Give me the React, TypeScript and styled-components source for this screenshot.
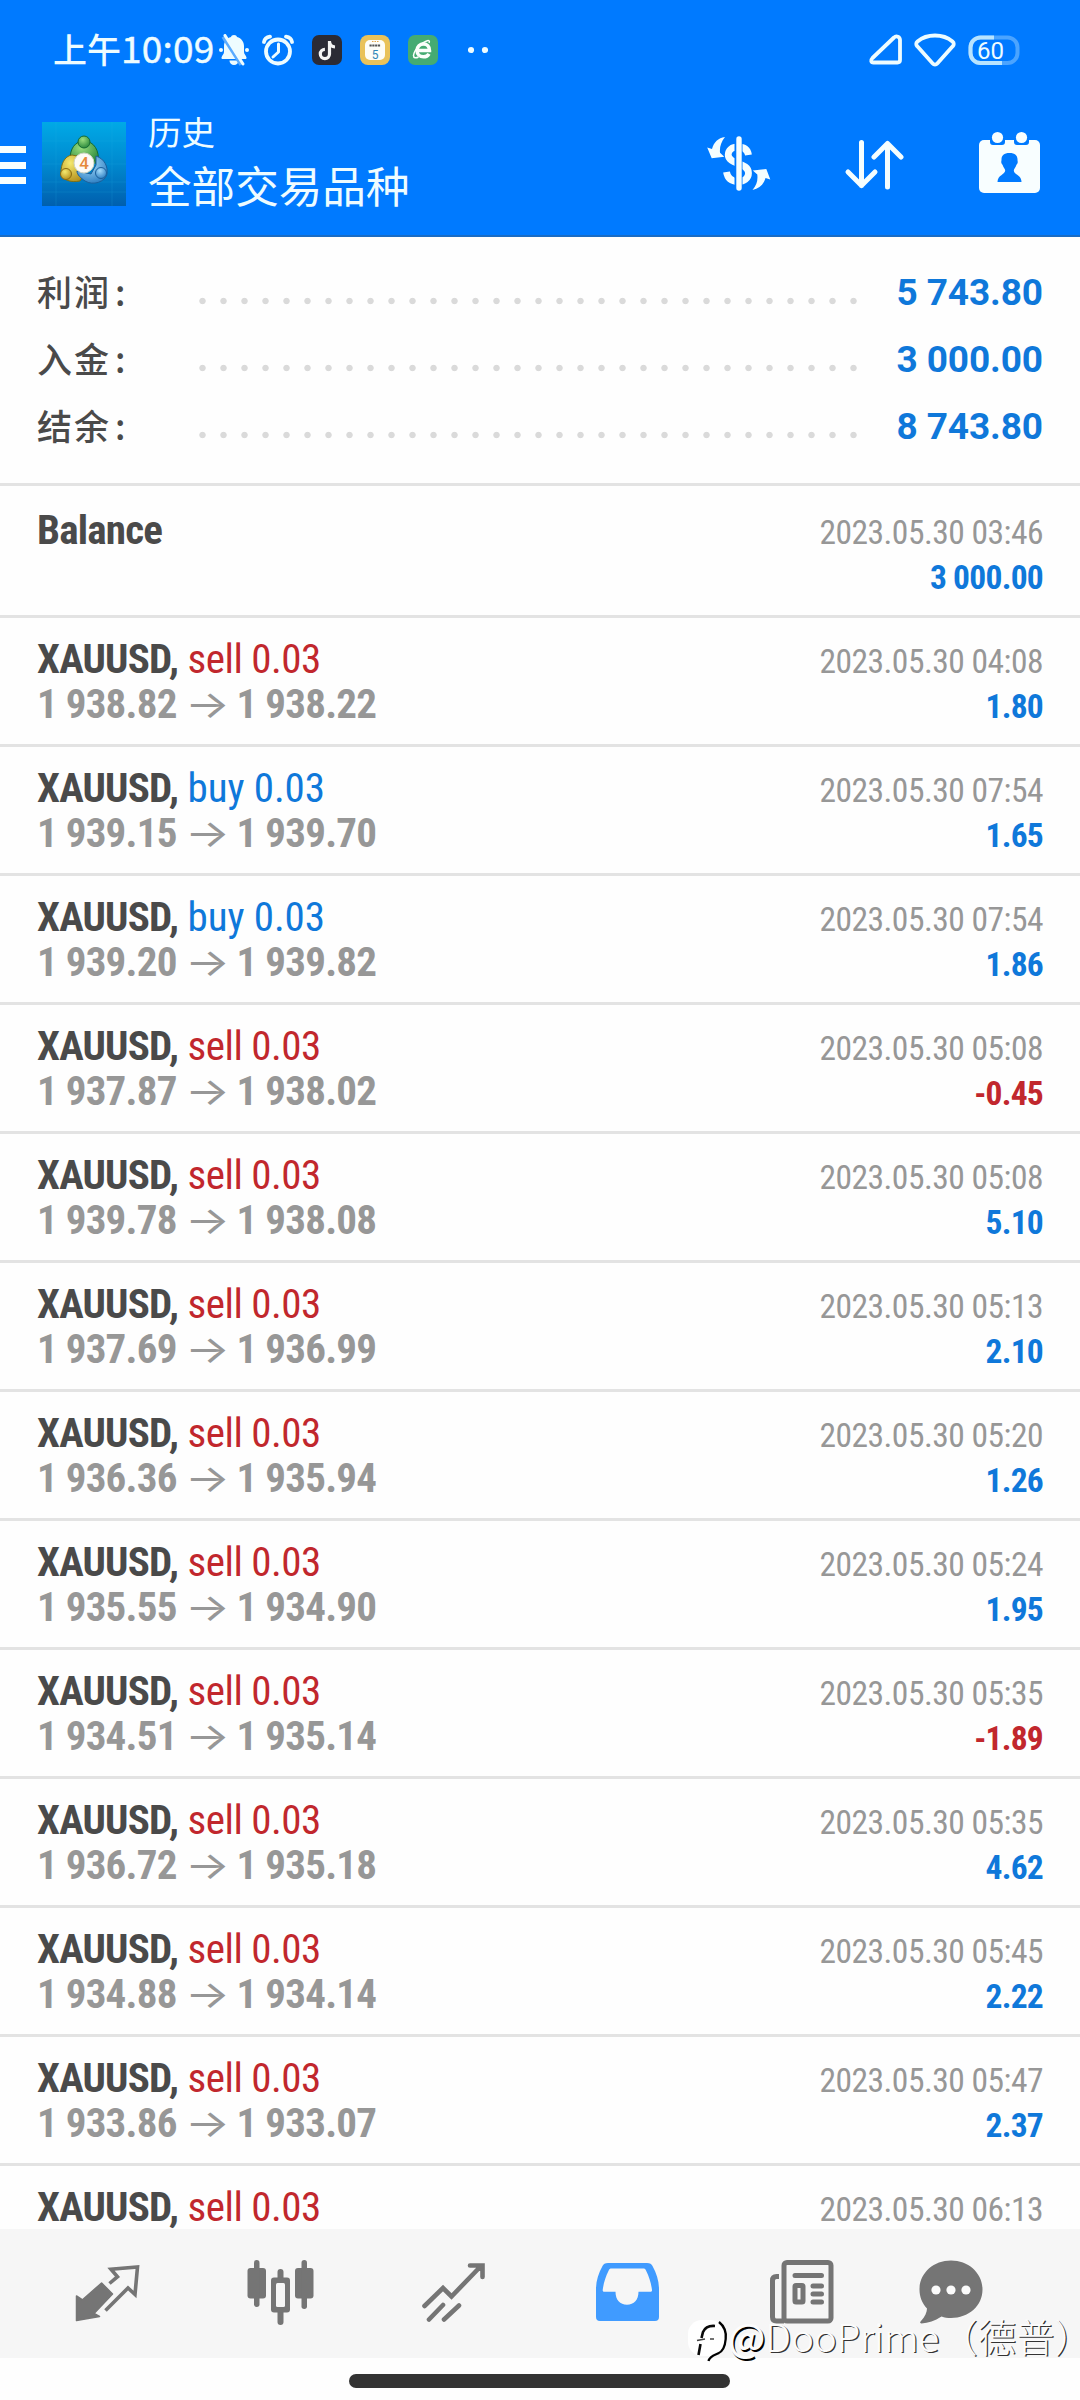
import React from 'react';
import styled, { createGlobalStyle } from 'styled-components';

const GlobalStyle = createGlobalStyle`
  * { box-sizing: border-box; }
  body { margin: 0; background: #fefefe; }
`;

const BLUE = '#007aff';
const ICE = '#eefcff';
const CJK = '"Noto Sans CJK SC", sans-serif';

const Screen = styled.div`
  width: 1080px;
  height: 2400px;
  display: flex;
  flex-direction: column;
  background: #fefefe;
  overflow: hidden;
  position: relative;
  font-family: Roboto, ${CJK};
`;

const Header = styled.header`
  height: 237px;
  flex: none;
  background: ${BLUE};
  border-bottom: 2px solid #1a6cc4;
`;

const StatusBar = styled.div`
  height: 100px;
  padding: 0 60px 0 53px;
  display: flex;
  align-items: center;
  color: ${ICE};
`;

const Clock = styled.div`
  width: 166px;
  display: flex;
  align-items: baseline;
  white-space: nowrap;
  margin-top: -4px;
  font: 500 34px/50px ${CJK};
`;

const ClockDigits = styled.span`
  font-size: 37px;
  font-weight: 400;
  letter-spacing: 0.2px;
  -webkit-text-stroke: 0.4px ${ICE};
`;

const StatusIcons = styled.div<{ $gap: number }>`
  display: flex;
  align-items: center;
  gap: ${(p) => p.$gap}px;
`;

const Overflow = styled.div`
  display: flex;
  margin-left: 12px;
`;

const Spacer = styled.div`
  flex: 1;
`;

const Toolbar = styled.div`
  height: 135px;
  display: flex;
  align-items: flex-start;
  padding: 10px 39px 0 0;
`;

const Menu = styled.div`
  width: 26px;
  margin: 36px 16px 0 0;
  display: flex;
  flex-direction: column;
  gap: 8.5px;
`;

const MenuBar = styled.span`
  height: 7px;
  background: #f8feff;
`;

const LogoBox = styled.div`
  margin-top: 12px;
  width: 84px;
  height: 84px;
`;

const Titles = styled.div`
  margin-left: 22px;
  color: ${ICE};
  font-family: ${CJK};
  white-space: nowrap;
`;

const Caption = styled.div`
  font-size: 33.5px;
  line-height: 42px;
`;

const Title = styled.div`
  font-size: 43.6px;
  line-height: 64px;
`;

const Actions = styled.div`
  display: flex;
  align-items: flex-start;
`;

const Action = styled.div<{ $left?: number }>`
  margin-left: ${(p) => p.$left ?? 0}px;
  margin-top: 2px;
  height: 84px;
`;

const Summary = styled.section`
  height: 249px;
  flex: none;
  padding: 22px 37px 0 37px;
  border-bottom: 3px solid #e3e3e3;
`;

const SummaryRow = styled.div`
  height: 67px;
  display: flex;
  align-items: center;
`;

const SummaryLabel = styled.div`
  width: 155px;
  margin-top: -4px;
  font: 500 35px/67px ${CJK};
  letter-spacing: 2px;
  color: #4a4a4a;
`;

const Colon = styled.span`
  margin-left: 4px;
`;

const Leader = styled.div`
  width: 672px;
  height: 8px;
  margin-top: 16px;
  background: radial-gradient(circle at 10.5px 4px, #dadada 2.8px, transparent 3.6px) 0 0 / 21px 8px repeat-x;
`;

const SummaryValue = styled.div`
  flex: 1;
  text-align: right;
  font: 700 37px/69px Roboto, sans-serif;
  letter-spacing: -0.1px;
  color: #0f78da;
  white-space: nowrap;
`;

const List = styled.main`
  flex: 1;
  min-height: 0;
  overflow: hidden;
`;

const Row = styled.article<{ $tall?: boolean }>`
  height: ${(p) => (p.$tall ? 132 : 129)}px;
  padding: ${(p) => (p.$tall ? 22 : 19)}px 37px 0;
  border-bottom: 3px solid #e3e3e3;
`;

const Line = styled.div`
  height: 45px;
  line-height: 45px;
  display: flex;
  justify-content: space-between;
  align-items: baseline;
  white-space: nowrap;
  font-stretch: 75%;
`;

const Deal = styled.div`
  font-size: 41px;
  color: #4a4a4a;
`;

const Symbol = styled.span`
  font-weight: 700;
  letter-spacing: -0.8px;
`;

const Side = styled.span<{ $side: 'buy' | 'sell' }>`
  letter-spacing: ${(p) => (p.$side === 'buy' ? '-0.1px' : '-0.5px')};
  color: ${(p) => (p.$side === 'buy' ? '#0f78da' : '#c1272d')};
`;

const Prices = styled.div`
  font-size: 41px;
  font-weight: 700;
  letter-spacing: -0.75px;
  color: #979797;
`;

const Arrow = styled.span`
  display: inline-block;
  margin-right: 7px;
  font: 400 38px/1 Inter, sans-serif;
  transform: scaleX(1.24);
  transform-origin: left;
`;

const DateText = styled.div`
  font-size: 33.5px;
  letter-spacing: -0.5px;
  color: #979797;
`;

const Profit = styled.div<{ $loss?: boolean }>`
  font-size: 33.5px;
  font-weight: 700;
  letter-spacing: -0.75px;
  color: ${(p) => (p.$loss ? '#c1272d' : '#0f78da')};
`;

const Nav = styled.nav`
  height: 129px;
  flex: none;
  background: #f6f6f6;
  padding-left: 21px;
  display: grid;
  grid-template-columns: 173px 173px 173px 174px 174px 126px;
`;

const Tab = styled.div`
  display: flex;
  justify-content: center;
  padding-top: 28px;
`;

const Footer = styled.footer`
  height: 42px;
  flex: none;
  display: flex;
  justify-content: center;
  padding: 16px 2px 0 0;
`;

const HomeBar = styled.div`
  width: 381px;
  height: 14px;
  border-radius: 7px;
  background: #333;
`;

const Watermark = styled.div`
  position: absolute;
  left: 687px;
  top: 2316px;
  display: flex;
  align-items: center;
  height: 46px;
  white-space: nowrap;
  color: #fcfcfc;
`;

const WatermarkText = styled.div`
  margin-top: -8px;
  font: 300 38.4px/46px ${CJK};
  text-shadow: 1.3px 1.3px 0.5px #333;
`;

const WatermarkAt = styled.span`
  margin-left: -1px;
  font-weight: 500;
  text-shadow: 1.5px 1.5px 0 #000;
`;

const HalfWidth = styled.span`
  font-feature-settings: 'halt';
`;

const trades: [('buy' | 'sell'), string, string, string, string][] = [
  ['sell', '1 938.82', '1 938.22', '04:08', '1.80'],
  ['buy', '1 939.15', '1 939.70', '07:54', '1.65'],
  ['buy', '1 939.20', '1 939.82', '07:54', '1.86'],
  ['sell', '1 937.87', '1 938.02', '05:08', '-0.45'],
  ['sell', '1 939.78', '1 938.08', '05:08', '5.10'],
  ['sell', '1 937.69', '1 936.99', '05:13', '2.10'],
  ['sell', '1 936.36', '1 935.94', '05:20', '1.26'],
  ['sell', '1 935.55', '1 934.90', '05:24', '1.95'],
  ['sell', '1 934.51', '1 935.14', '05:35', '-1.89'],
  ['sell', '1 936.72', '1 935.18', '05:35', '4.62'],
  ['sell', '1 934.88', '1 934.14', '05:45', '2.22'],
  ['sell', '1 933.86', '1 933.07', '05:47', '2.37'],
  ['sell', '', '', '06:13', ''],
];

const BellOff = () => (
  <svg width="30" height="32" viewBox="0 0 30 32" fill={ICE}>
    <path d="M15 1c1.600 0 2.800.8 3 2C22.500 4.200 25 8 25 12v6c0 2 2 3.500 2.500 5.500.2 1-.5 1.500-1.500 1.500H4c-1 0-1.700-.5-1.500-1.500C3 21.500 5 20 5 18v-6c0-4 2.500-7.800 7-9 .2-1.200 1.400-2 3-2z" />
    <path d="M10.500 26.500h9a4.500 4.500 0 0 1-9 0z" />
    <circle cx="2" cy="16" r="2" />
    <circle cx="28" cy="16" r="2" />
    <path d="M4.500 2.500l18 28" stroke="#5aabff" strokeWidth="4.500" />
    <path d="M6 1.500l18 28.500" stroke={ICE} strokeWidth="3" strokeLinecap="round" />
  </svg>
);

const Alarm = () => (
  <svg width="32" height="32" viewBox="0 0 32 32" fill="none" stroke={ICE} strokeLinecap="round">
    <circle cx="16" cy="17.500" r="12" strokeWidth="3.800" />
    <path d="M16.500 10v8l-5.500 5" strokeWidth="3" strokeLinejoin="round" />
    <path d="M2 8C2.500 5 5 3 8 2.600M30 8C29.500 5 27 3 24 2.600" strokeWidth="3.800" />
  </svg>
);

const TikTok = () => (
  <svg width="30" height="30" viewBox="0 0 30 30">
    <rect width="30" height="30" rx="7" fill="#2b2b35" />
    <path d="M17.500 6v13a4.600 4.600 0 1 1-4.600-4.600M17.500 7c.5 3 2.500 4.800 5.500 5" fill="none" stroke="#f4f4f4" strokeWidth="3.200" />
  </svg>
);

const CalendarApp = () => (
  <svg width="30" height="30" viewBox="0 0 30 30">
    <rect width="30" height="30" rx="8" fill="#e9c25a" />
    <rect x="5" y="5" width="20" height="20" rx="5" fill="#fdfdf8" />
    <path d="M12 6.500h7" stroke="#e2a54a" strokeWidth="1.200" strokeDasharray="1.500 1" />
    <path d="M9.500 10.500h11" stroke="#555" strokeWidth="2.200" strokeDasharray="2.200 .6" />
    <text x="15" y="23.500" fontSize="12" fontFamily="Roboto, sans-serif" textAnchor="middle" fill="#2f86b8">5</text>
  </svg>
);

const Browser = () => (
  <svg width="30" height="30" viewBox="0 0 30 30">
    <rect width="30" height="30" rx="7" fill="#45ab72" />
    <g fill="none" stroke="#fbfffb">
      <path d="M9 15.500h12.500c0-4-2.500-6.500-6-6.500s-6.500 2.800-6.500 6.500 2.800 6.300 6.500 6.300c2.500 0 4.500-1.200 5.500-3" strokeWidth="3.500" />
      <path d="M21 8c1-2 0-3-2.500-2C13 8 6 15 5.500 20.500c0 2.800 2.500 2.800 5 1.500" strokeWidth="1.500" />
    </g>
  </svg>
);

const MoreDots = () => (
  <svg width="20" height="8" viewBox="0 0 20 8" fill={ICE}>
    <circle cx="3" cy="4" r="3.100" />
    <circle cx="17" cy="4" r="3.100" />
  </svg>
);

const Signal = () => (
  <svg width="34" height="34" viewBox="0 0 34 34" fill="none" stroke={ICE} strokeWidth="3.800" strokeLinejoin="round">
    <path d="M26 4.500 4.500 25C2.300 27.200 3 29.500 5.500 29.500h24c1.700 0 2.500-1 2.500-2.500V7c0-3.300-3.700-4.800-6-2.500z" />
  </svg>
);

const Wifi = () => (
  <svg width="42" height="34" viewBox="0 0 42 34" fill="none" stroke={ICE} strokeWidth="3.800" strokeLinejoin="round">
    <path d="M3.500 8.500C13 .5 29 .5 38.500 8.500c1.800 1.500 1.500 3.500.2 4.800L23.300 30.500c-1.300 1.400-3.300 1.400-4.600 0L3.300 13.300C2 12 1.700 10 3.500 8.500z" />
  </svg>
);

const Battery = () => (
  <svg width="52" height="34" viewBox="0 0 52 34">
    <rect x="2.500" y="4.500" width="47" height="25.500" rx="10" fill="none" stroke="#4ba4ff" strokeWidth="4" />
    <path d="M26 4.500H12.500a10 10 0 0 0-10 10V20a10 10 0 0 0 10 10H34" fill="none" stroke="#b8e4ff" strokeWidth="4" />
    <text x="22.500" y="25.500" fontSize="24" fontFamily="Roboto, sans-serif" textAnchor="middle" fill={ICE}>60</text>
  </svg>
);

const Logo = () => (
  <svg width="84" height="84" viewBox="0 0 84 84">
    <defs>
      <linearGradient id="sky" x1="0" y1="0" x2="0" y2="1">
        <stop offset="0" stopColor="#00a9e6" />
        <stop offset=".5" stopColor="#0089cf" />
        <stop offset="1" stopColor="#005fae" />
      </linearGradient>
      <radialGradient id="green" cx=".4" cy=".3" r=".8">
        <stop offset="0" stopColor="#9ade7e" />
        <stop offset="1" stopColor="#1d7f35" />
      </radialGradient>
      <radialGradient id="gold" cx=".4" cy=".3" r=".8">
        <stop offset="0" stopColor="#f4e96f" />
        <stop offset="1" stopColor="#b08a17" />
      </radialGradient>
      <radialGradient id="azure" cx=".4" cy=".3" r=".8">
        <stop offset="0" stopColor="#a6dcfb" />
        <stop offset="1" stopColor="#2277be" />
      </radialGradient>
    </defs>
    <rect width="84" height="84" fill="url(#sky)" />
    <path d="M0 19h84M0 42h84M0 60h84M0 70h84M14 0v84M70 0v84" stroke="#27b4e4" strokeWidth=".5" opacity=".35" />
    <path d="M42 19c-9 0-14 8-14 18l8 5 20-1c2-12-4-22-14-22z" fill="url(#green)" stroke="#146b33" />
    <path d="M30 33c-8 1-11 10-11 17 0 8 10 11 19 9l4-7-9-9 2-9z" fill="url(#gold)" stroke="#7d7016" />
    <path d="M54 34c9 3 12 11 11 18-2 8-14 12-22 7-4-3-8-6-8-10l14 3 5-9z" fill="url(#azure)" stroke="#1c5f9b" />
    <circle cx="42" cy="20" r="6" fill="url(#green)" stroke="#146b33" />
    <circle cx="24" cy="52" r="5.500" fill="url(#gold)" stroke="#8a6a12" />
    <circle cx="59" cy="51" r="5.500" fill="url(#azure)" stroke="#1c5f9b" />
    <circle cx="42" cy="41" r="10" fill="#fdfbf6" stroke="#cfd4c4" />
    <text x="42" y="47" fontSize="17" fontWeight="500" fontFamily="Roboto, sans-serif" textAnchor="middle" fill="#e58a3c">4</text>
  </svg>
);

const DollarCycle = () => (
  <svg width="64" height="84" viewBox="0 -25 64 84" fill="none" stroke="#f5feff">
    <path d="M41.500 18C40.500 12 36 10 31 10c-6 0-9.800 3-9.800 7.800C21.200 28 41.500 25 41.500 36c0 5.500-4.500 8.500-10.500 8.500-6.500 0-10.500-3.500-11.500-9.500" strokeWidth="6.800" />
    <path d="M31.500 0v54" stroke={BLUE} strokeWidth="8" />
    <path d="M32 2v49" strokeWidth="5.400" strokeLinecap="round" />
    <path d="M18 0c-7 1-11 5-13 12L.2 10.500l4.500 10.800 12.600-1.500-4.300-4C12.500 10 14 5 18 0zM45.500 53c7-1.500 11-5.500 13-12l4.800 1.500-4-10.500-13.500 1.500 4.500 4C51 44 49.500 48 45.500 53z" fill="#f5feff" stroke="none" />
  </svg>
);

const SortArrows = () => (
  <svg width="60" height="84" viewBox="0 -26 60 84" fill="none" stroke="#f5feff" strokeWidth="5" strokeLinecap="round" strokeLinejoin="round">
    <path d="M17.500 4.500v43M4 34l13.500 13.500L31 34" />
    <path d="M43.500 49V5.500M30 19 43.500 5.500 57 19" />
  </svg>
);

const ContactCalendar = () => (
  <svg width="62" height="84" viewBox="0 -18 62 84">
    <rect x="0" y="10" width="61" height="53" rx="5" fill="#f8feff" />
    <path d="M11 9h15v3a3 3 0 0 1-3 3h-9a3 3 0 0 1-3-3zM35 9h15v3a3 3 0 0 1-3 3h-9a3 3 0 0 1-3-3z" fill={BLUE} />
    <circle cx="18.500" cy="7.500" r="5.600" fill="#f8feff" />
    <circle cx="42.500" cy="7.500" r="5.600" fill="#f8feff" />
    <path d="M30.500 23c5.500 0 8 2.600 8 6.500 0 1.500.4 2 .2 3-.3 1.500-1 1.500-1.300 2.600-.5 2-2.600 4-2.600 5.400 0 4 7.700 4.500 7.700 11.500h-24c0-7 7.700-7.500 7.700-11.500 0-1.400-2.100-3.400-2.600-5.400-.3-1.100-1-1.100-1.300-2.600-.2-1 .2-1.500.2-3 0-3.900 2.500-6.500 8-6.500z" fill={BLUE} />
  </svg>
);

const GREY = '#757575';

/* Tab icons share a 68x68 box. */
const TabIcon = ({ children }: { children: React.ReactNode }) => (
  <svg width="68" height="68" viewBox="0 0 68 68" fill="none" stroke={GREY}>
    {children}
  </svg>
);

const QuotesIcon = () => (
  <TabIcon>
    <path d="M27.600 26 38.500 37 20 56.500l5.500 3L2.500 63.500V39l6 3.800z" fill={GREY} strokeWidth="1.500" strokeLinejoin="round" />
    <path d="M35.500 26.500l8-6.800-6.500-7.500L63.500 10 61 37.500l-7-6.500L31.500 53.500" strokeWidth="3.600" />
  </TabIcon>
);

const ChartIcon = () => (
  <TabIcon>
    <g fill={GREY} stroke="none">
      <rect x=".5" y="11" width="18.500" height="30.500" rx="3" />
      <rect x="7" y="3" width="5.500" height="47" rx="2.700" />
      <rect x="48" y="11" width="18.500" height="30.500" rx="3" />
      <rect x="54.500" y="3" width="5.500" height="49" rx="2.700" />
      <rect x="30.500" y="12" width="6" height="56" rx="3" />
      <rect x="24" y="20.500" width="19" height="35" rx="3" />
      <rect x="29" y="26" width="9" height="24" rx="1.500" fill="#f6f6f6" />
    </g>
  </TabIcon>
);

const TradeIcon = () => (
  <TabIcon>
    <path d="M4.500 49 23 31l8.500 8.500L60 10M50 8.500h12.500V20M9 62.500 23 48M24 62.500 39 48.500" strokeWidth="4.600" strokeLinecap="round" />
  </TabIcon>
);

const HistoryIcon = () => (
  <TabIcon>
    <path d="M15 6h39c3 0 4.500 1 5.500 3 4 7 6.500 15 6.500 23v28a4 4 0 0 1-4 4H7a4 4 0 0 1-4-4V32C3 24 5.500 16 9.500 9c1-2 2.500-3 5.500-3zM18.500 11.500c-1.500 0-2.200.5-2.800 2C12.500 20 10.500 26.500 9.700 33c-.1 1 .3 1.800 1.500 1.800H22.500c0 8 4.500 13 11.500 13s11.500-5 11.500-13h12c1.200 0 1.600-.8 1.500-1.800-.8-6.500-2.800-13-6-19.500-.6-1.500-1.300-2-2.800-2z" fill="#409bff" fillRule="evenodd" stroke="none" />
  </TabIcon>
);

const NewsIcon = () => (
  <TabIcon>
    <rect x="17" y="5.500" width="47" height="58.500" rx="3" strokeWidth="5" />
    <path d="M12 19.500H9.500c-2.500 0-4 1.500-4 4V60c0 2.500 1.500 4 4 4H17" strokeWidth="5" />
    <path d="M28 18.500h26.500M46 29h8.500M46 37h8.500M46 45h8.500" strokeWidth="5" strokeLinecap="round" />
    <rect x="28" y="28.500" width="8" height="16.500" rx="1" strokeWidth="5" />
  </TabIcon>
);

const ChatIcon = () => (
  <TabIcon>
    <path d="M34 3.500c17.500 0 31.500 12.500 31.500 29S51.500 61 34 61c-3.500 0-6.500-.3-9.500-1.500-7 4.500-13 6.500-20 7C2.500 66 3 65 4 64c4-4 6-9 6-12.500C5 46 2.500 40 2.500 32.500 2.500 16 16.500 3.500 34 3.500z" fill={GREY} stroke="none" />
    <circle cx="19" cy="33" r="4.600" fill="#fbfbfb" stroke="none" />
    <circle cx="34" cy="33" r="4.600" fill="#fbfbfb" stroke="none" />
    <circle cx="49" cy="33" r="4.600" fill="#fbfbfb" stroke="none" />
  </TabIcon>
);

const WatermarkMark = () => (
  <svg width="42" height="48" viewBox="0 0 42 48" fill="none">
    <rect x="1" y="5" width="36" height="36" rx="14" fill="#fff" />
    <path d="M28 11c-6-.5-10 1.500-12 6l-1.500 6M13.500 29 11.500 40" stroke="#0a0a0a" strokeWidth="2.600" />
    <path d="M10 25.500l8-1.500M23 24h4" stroke="#444" strokeWidth="1.600" />
    <path d="M32 7c5 4 7.500 10 6.700 17C38 32 35 37 31 38.500M32 38c-4 2-9 2.500-10.500 8" stroke="#000" strokeWidth="2.300" />
  </svg>
);

const tabs = [QuotesIcon, ChartIcon, TradeIcon, HistoryIcon, NewsIcon, ChatIcon];

const summary = [
  ['利润', '5 743.80'],
  ['入金', '3 000.00'],
  ['结余', '8 743.80'],
];

export default function App() {
  return (
    <Screen>
      <GlobalStyle />
      <Header>
        <StatusBar>
          <Clock>
            上午<ClockDigits>10:09</ClockDigits>
          </Clock>
          <StatusIcons $gap={18}>
            <StatusIcons $gap={13}>
              <BellOff />
              <Alarm />
            </StatusIcons>
            <TikTok />
            <CalendarApp />
            <Browser />
            <Overflow>
              <MoreDots />
            </Overflow>
          </StatusIcons>
          <Spacer />
          <StatusIcons $gap={12}>
            <Signal />
            <Wifi />
            <Battery />
          </StatusIcons>
        </StatusBar>
        <Toolbar>
          <Menu>
            <MenuBar />
            <MenuBar />
            <MenuBar />
          </Menu>
          <LogoBox>
            <Logo />
          </LogoBox>
          <Titles>
            <Caption>历史</Caption>
            <Title>全部交易品种</Title>
          </Titles>
          <Spacer />
          <Actions>
            <Action><DollarCycle /></Action>
            <Action $left={73}><SortArrows /></Action>
            <Action $left={75}><ContactCalendar /></Action>
          </Actions>
        </Toolbar>
      </Header>
      <Summary>
        {summary.map(([label, value]) => (
          <SummaryRow key={label}>
            <SummaryLabel>
              {label}
              <Colon>:</Colon>
            </SummaryLabel>
            <Leader />
            <SummaryValue>{value}</SummaryValue>
          </SummaryRow>
        ))}
      </Summary>
      <List>
        <Row $tall>
          <Line>
            <Deal><Symbol>Balance</Symbol></Deal>
            <DateText>2023.05.30 03:46</DateText>
          </Line>
          <Line>
            <Prices>&nbsp;</Prices>
            <Profit>3 000.00</Profit>
          </Line>
        </Row>
        {trades.map(([side, open, close, time, profit], i) => (
          <Row key={i}>
            <Line>
              <Deal>
                <Symbol>XAUUSD,</Symbol> <Side $side={side}>{side} 0.03</Side>
              </Deal>
              <DateText>2023.05.30 {time}</DateText>
            </Line>
            {open && (
              <Line>
                <Prices>
                  {open} <Arrow>→</Arrow> {close}
                </Prices>
                <Profit $loss={profit.startsWith('-')}>{profit}</Profit>
              </Line>
            )}
          </Row>
        ))}
      </List>
      <Nav>
        {tabs.map((Icon, i) => (
          <Tab key={i}><Icon /></Tab>
        ))}
      </Nav>
      <Footer>
        <HomeBar />
      </Footer>
      <Watermark>
        <WatermarkMark />
        <WatermarkText>
          <WatermarkAt>@</WatermarkAt>DooPrime（德普<HalfWidth>）</HalfWidth>
        </WatermarkText>
      </Watermark>
    </Screen>
  );
}
